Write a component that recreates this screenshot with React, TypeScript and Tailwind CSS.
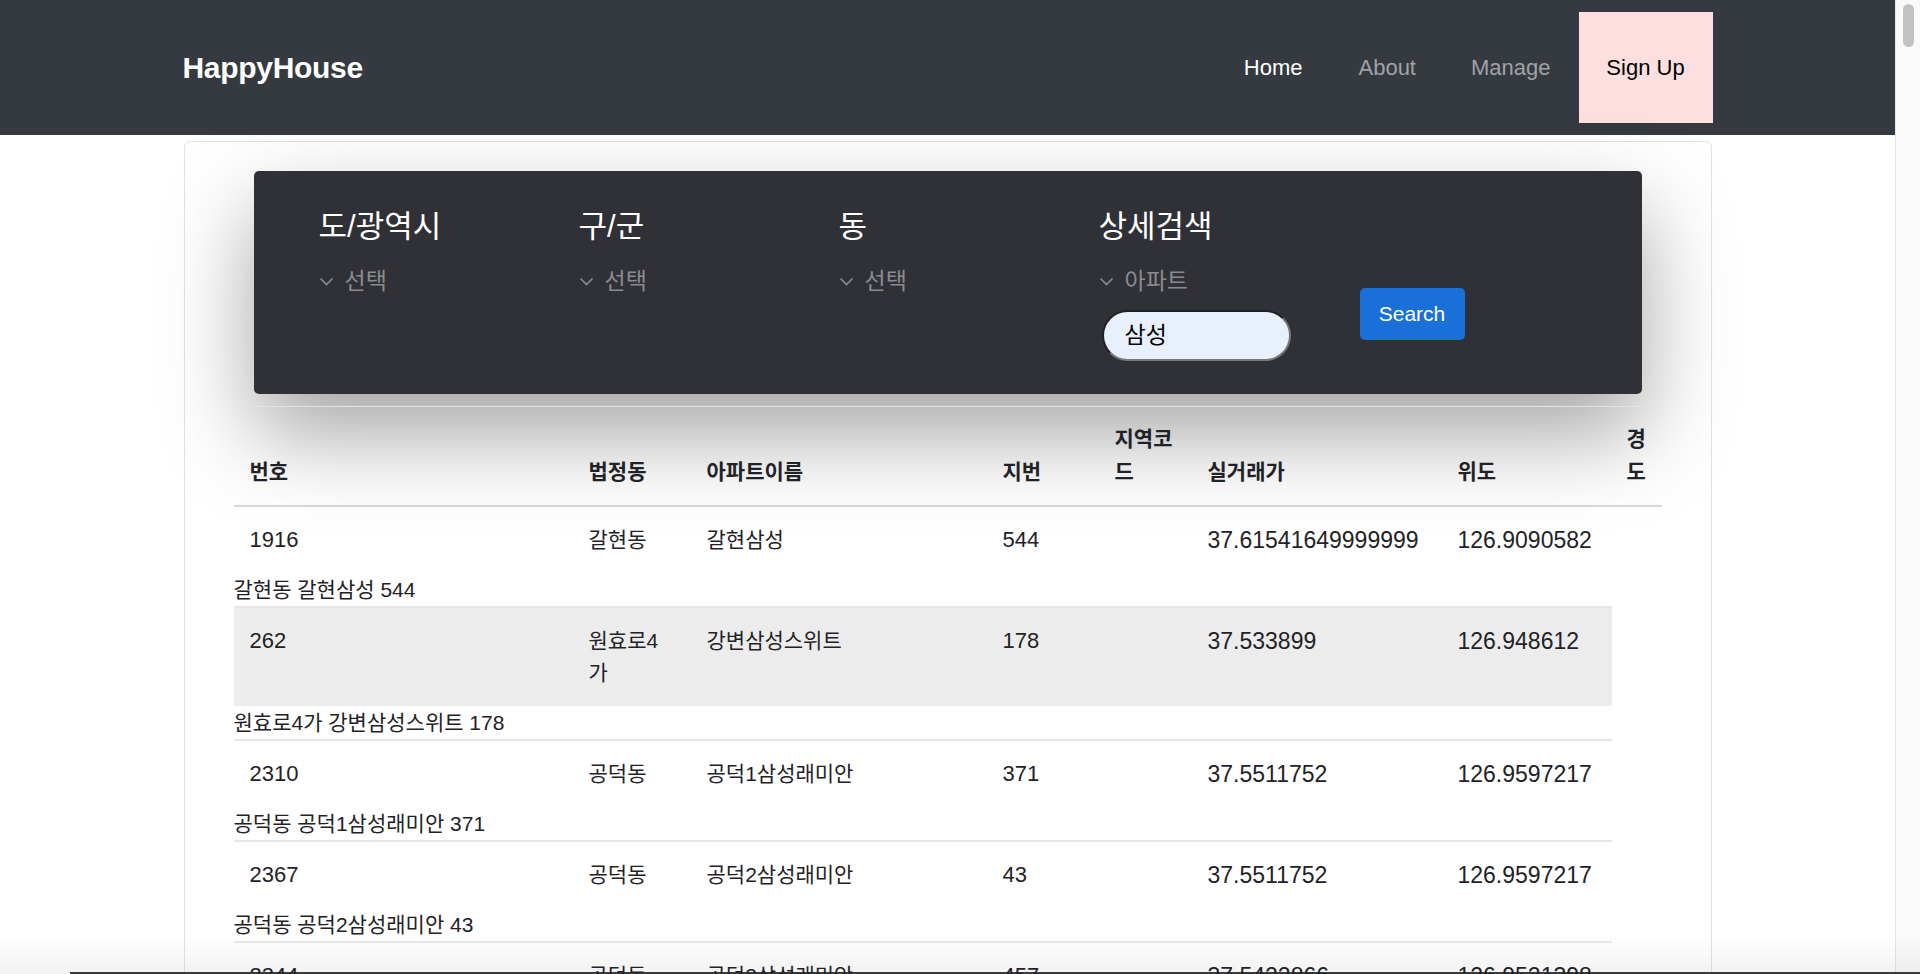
import React from "react";

const FONT = "font-['Liberation_Sans','Noto_Sans_CJK_KR',sans-serif]";

function Chevron() {
  return (
    <svg width="15" height="9" viewBox="0 0 15 9" fill="none" className="shrink-0">
      <polyline points="1.5,1.5 7.5,7.5 13.5,1.5" stroke="#8a8b90" strokeWidth="1.6" fill="none" />
    </svg>
  );
}

type Rec = {
  no: string;
  dong: React.ReactNode;
  name: string;
  jibun: string;
  lat: string;
  lng: string;
  addr: string;
  gray?: boolean;
};

const records: Rec[] = [
  { no: "1916", dong: "갈현동", name: "갈현삼성", jibun: "544", lat: "37.61541649999999", lng: "126.9090582", addr: "갈현동 갈현삼성 544" },
  {
    no: "262",
    dong: (
      <>
        원효로4
        <br />가
      </>
    ),
    name: "강변삼성스위트",
    jibun: "178",
    lat: "37.533899",
    lng: "126.948612",
    addr: "원효로4가 강변삼성스위트 178",
    gray: true,
  },
  { no: "2310", dong: "공덕동", name: "공덕1삼성래미안", jibun: "371", lat: "37.5511752", lng: "126.9597217", addr: "공덕동 공덕1삼성래미안 371" },
  { no: "2367", dong: "공덕동", name: "공덕2삼성래미안", jibun: "43", lat: "37.5511752", lng: "126.9597217", addr: "공덕동 공덕2삼성래미안 43" },
  { no: "2344", dong: "공덕동", name: "공덕3삼성래미안", jibun: "457", lat: "37.5422866", lng: "126.9521398", addr: "공덕동 공덕3삼성래미안 457" },
];

export default function App() {
  return (
    <div className={`${FONT} relative w-[1920px] h-[974px] overflow-hidden bg-white text-[#1f2226] flex`}>
      {/* page */}
      <div className="w-[1895px] flex flex-col">
        {/* navbar */}
        <nav className="h-[135px] shrink-0 bg-[#343a40] flex items-center">
          <div className="w-[1530px] mx-auto flex items-center justify-between">
            <div className="text-[30px] font-bold text-white tracking-[-0.3px]">HappyHouse</div>
            <div className="flex items-center h-[111px] text-[22px]">
              <span className="text-white">Home</span>
              <span className="ml-[56px] text-[#a0a3a7]">About</span>
              <span className="ml-[55px] text-[#a0a3a7]">Manage</span>
              <span className="ml-[28px] h-[111px] w-[134px] bg-[#fddfdf] text-black flex items-center justify-center">
                Sign Up
              </span>
            </div>
          </div>
        </nav>

        {/* card */}
        <div className="mx-auto mt-[6px] w-[1528px] flex-1 border border-[#dfe1e4] rounded-[6px] pt-[29px]">
          {/* search panel */}
          <div className="relative z-0 mx-[69px] h-[223px] rounded-[5px] bg-[#303136] shadow-[0_40px_90px_rgba(0,0,0,0.36)] flex pl-[65px] pt-[38px]">
            {["도/광역시", "구/군", "동"].map((h) => (
              <div key={h} className="w-[260px] flex flex-col">
                <div className="text-[31px] leading-[36px] text-white">{h}</div>
                <div className="mt-[23px] h-[26px] flex items-center gap-[11px] text-[23px] text-[#8a8b90]">
                  <Chevron />
                  <span>선택</span>
                </div>
              </div>
            ))}
            <div className="w-[261px] flex flex-col">
              <div className="text-[31px] leading-[36px] text-white">상세검색</div>
              <div className="mt-[23px] h-[26px] flex items-center gap-[11px] text-[23px] text-[#8a8b90]">
                <Chevron />
                <span>아파트</span>
              </div>
              <div className="mt-[16px] ml-[3px] w-[189px] h-[51px] rounded-full bg-[#e8f0fe] border-2 border-t-[#1f2024] border-l-[#1f2024] border-r-[#77787c] border-b-[#77787c] flex items-center pl-[21px] text-[23px] text-black">
                삼성
              </div>
            </div>
            <div className="mt-[79px] w-[105px] h-[52px] rounded-[5px] bg-[#1b6fd8] text-white text-[21px] flex items-center justify-center">
              Search
            </div>
          </div>

          {/* table */}
          <div className="relative z-10 mx-[49px] mt-[12px]">
            <div className="border-t border-[#e1e3e6] border-b-2 border-b-[#d4d6dc] grid grid-cols-[339px_118px_296px_112px_93px_250px_169px_53px] items-end pt-[15px] pb-[17px] text-[21px] font-bold leading-[33px]">
              <div className="px-[16px]">번호</div>
              <div className="px-[16px]">법정동</div>
              <div className="px-[16px]">아파트이름</div>
              <div className="px-[16px]">지번</div>
              <div className="px-[16px] whitespace-nowrap">
                지역코
                <br />드
              </div>
              <div className="px-[16px]">실거래가</div>
              <div className="px-[16px]">위도</div>
              <div className="px-[16px]">
                경
                <br />도
              </div>
            </div>

            {records.map((r) => (
              <div key={r.no} className="w-[1378px] border-b-2 border-[#e4e6e9]">
                <div
                  className={`grid grid-cols-[339px_118px_296px_112px_93px_250px_169px] items-start py-[17px] leading-[32px] ${
                    r.gray ? "bg-[#ececec]" : ""
                  }`}
                >
                  <div className="px-[16px] text-[22px]">{r.no}</div>
                  <div className="px-[16px] text-[21px] whitespace-nowrap">{r.dong}</div>
                  <div className="px-[16px] text-[21px] whitespace-nowrap">{r.name}</div>
                  <div className="px-[16px] text-[22px]">{r.jibun}</div>
                  <div className="px-[16px]"></div>
                  <div className="px-[16px] text-[23px] whitespace-nowrap">{r.lat}</div>
                  <div className="px-[16px] text-[23px] whitespace-nowrap">{r.lng}</div>
                </div>
                <div className="leading-[33px] text-[21px] whitespace-nowrap">{r.addr}</div>
              </div>
            ))}
          </div>
        </div>
      </div>

      {/* scrollbar */}
      <div className="w-[25px] h-full bg-[#fafafa] border-l border-[#e6e6e6] flex flex-col items-center pt-[4px]">
        <div className="w-[11px] h-[43px] rounded-full bg-[#c2c2c2]" />
      </div>

      {/* window bottom fade & edge */}
      <div className="pointer-events-none absolute left-0 right-0 bottom-0 h-[40px] bg-gradient-to-b from-transparent to-[rgba(0,0,0,0.05)]" />
      <div className="pointer-events-none absolute left-[70px] right-0 bottom-0 h-[2px] bg-[#3a3a3a]" />
    </div>
  );
}
